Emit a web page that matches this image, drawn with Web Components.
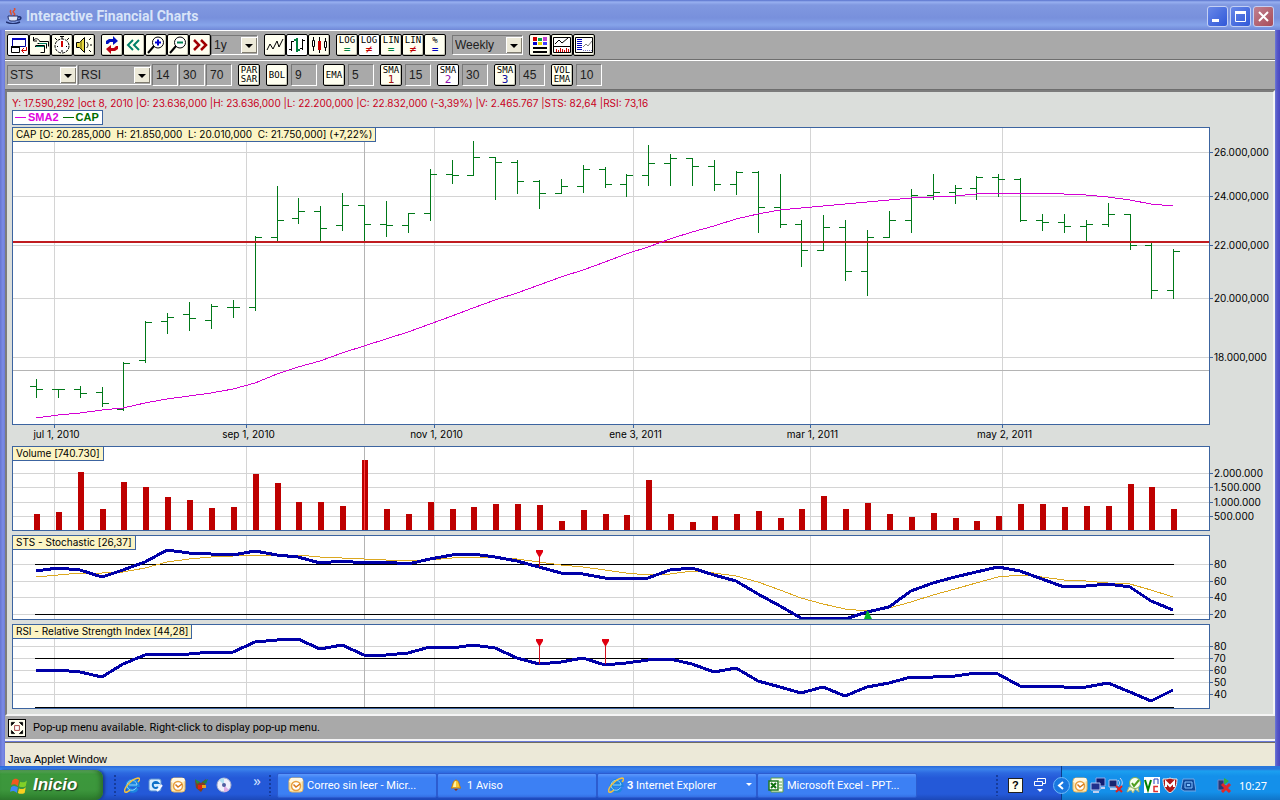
<!DOCTYPE html>
<html lang="es">
<head>
<meta charset="utf-8">
<title>Interactive Financial Charts</title>
<style>
	body {
		margin: 0;
		background: #245edb;
		font-family: "Liberation Sans", Arial, sans-serif;
		font-size: 11px;
		color: #000;
	}

	desktop-screen {
		min-height: 100vh;
	}
</style>
</head>
<body>

<desktop-screen>
	<app-window caption="Interactive Financial Charts">
		<tool-bar>
			<tool-group>
				<tool-button icon="detach" label="Detach window" on></tool-button>
				<tool-button icon="restore" label="Restore windows"></tool-button>
				<tool-button icon="timer" label="Auto refresh"></tool-button>
				<tool-button icon="sound" label="Sound"></tool-button>
			</tool-group>
			<tool-group>
				<tool-button icon="refresh" label="Refresh"></tool-button>
				<tool-button icon="back" label="Back"></tool-button>
				<tool-button icon="zoomin" label="Zoom in"></tool-button>
				<tool-button icon="zoomout" label="Zoom out"></tool-button>
				<tool-button icon="forward" label="Forward"></tool-button>
				<tool-select label="Range" options="1y,2y,5y" style="--width: 47px"></tool-select>
			</tool-group>
			<tool-group>
				<tool-button icon="line" label="Line chart"></tool-button>
				<tool-button icon="ohlc" label="Bar chart" on></tool-button>
				<tool-button icon="candle" label="Candlestick chart"></tool-button>
			</tool-group>
			<tool-group>
				<tool-button top="LOG" bottom="=" tint="#008040"></tool-button>
				<tool-button top="LOG" bottom="≠" tint="#c00000" on></tool-button>
				<tool-button top="LIN" bottom="=" tint="#008040"></tool-button>
				<tool-button top="LIN" bottom="≠" tint="#c00000"></tool-button>
				<tool-button top="%" bottom="=" tint="#0000c0"></tool-button>
			</tool-group>
			<tool-group>
				<tool-select label="Period" options="Weekly,Daily,Monthly" style="--width: 71px"></tool-select>
			</tool-group>
			<tool-group>
				<tool-button icon="colors" label="Colors"></tool-button>
				<tool-button icon="panels" label="Panels"></tool-button>
				<tool-button icon="table" label="Data table"></tool-button>
			</tool-group>
		</tool-bar>

		<tool-bar>
			<tool-group style="--gap: 1px">
				<tool-select label="Indicator 1" options="STS,RSI,MACD" style="--width: 70px"></tool-select>
				<tool-select label="Indicator 2" options="RSI,STS,MACD" style="--width: 73px"></tool-select>
				<tool-field label="RSI period" value="14"></tool-field>
				<tool-field label="RSI low" value="30"></tool-field>
				<tool-field label="RSI high" value="70"></tool-field>
			</tool-group>
			<tool-group>
				<tool-button top="PAR" bottom="SAR"></tool-button>
			</tool-group>
			<tool-group style="--gap: 3px">
				<tool-button top="BOL"></tool-button>
				<tool-field label="BOL period" value="9"></tool-field>
			</tool-group>
			<tool-group style="--gap: 3px">
				<tool-button top="EMA"></tool-button>
				<tool-field label="EMA period" value="5"></tool-field>
			</tool-group>
			<tool-group style="--gap: 3px">
				<tool-button top="SMA" bottom="1" tint="#a01010"></tool-button>
				<tool-field label="SMA 1 period" value="15"></tool-field>
			</tool-group>
			<tool-group style="--gap: 3px">
				<tool-button top="SMA" bottom="2" tint="#9010b0" on></tool-button>
				<tool-field label="SMA 2 period" value="30"></tool-field>
			</tool-group>
			<tool-group style="--gap: 3px">
				<tool-button top="SMA" bottom="3" tint="#1010a0"></tool-button>
				<tool-field label="SMA 3 period" value="45"></tool-field>
			</tool-group>
			<tool-group style="--gap: 3px">
				<tool-button top="VOL" bottom="EMA"></tool-button>
				<tool-field label="Volume EMA period" value="10"></tool-field>
			</tool-group>
		</tool-bar>

		<chart-panel>
			<span slot="info">Y: 17.590,292 |oct 8, 2010 |O: 23.636,000 |H: 23.636,000 |L: 22.200,000 |C: 22.832,000 (-3,39%) |V: 2.465.767 |STS: 82,64 |RSI: 73,16</span>
			<chart-pane kind="price">CAP [O: 20.285,000  H: 21.850,000  L: 20.010,000  C: 21.750,000] (+7,22%)</chart-pane>
			<date-axis></date-axis>
			<chart-pane kind="volume">Volume [740.730]</chart-pane>
			<chart-pane kind="sts">STS - Stochastic [26,37]</chart-pane>
			<chart-pane kind="rsi">RSI - Relative Strength Index [44,28]</chart-pane>
		</chart-panel>

		<hint-bar>Pop-up menu available. Right-click to display pop-up menu.</hint-bar>
		<span slot="status">Java Applet Window</span>
	</app-window>

	<task-bar></task-bar>
</desktop-screen>

<script>
/* ---------- icons ---------- */

// toolbar icons live on a 20x20 grid
const ICONS = {
	detach: '<path d="M4.500 3.500h13v8h-13z" fill="#fff" stroke="#0000a0"/><path d="M4 3h14v2H4z" fill="#0000c0"/><path d="M3.500 11.500h8v6h-8z" fill="#fff" stroke="#000"/><path d="M3 11h9v2H3z"/><path d="M18.500 12v3.500H14M16 13l-2.500 2.500L16 18" fill="none" stroke="#d00000"/>',
	restore: '<path d="M9.500 6.500h9v5M7.500 8.500h9v5M5.500 10.500h9v7h-4M5 11.500h10" fill="none" stroke="#000"/><path d="M10 6.500C8 3 5 3 3.500 5.500M3.500 2v4H7" fill="none" stroke="#000"/><path d="M9 8h8v1H9zM6 11h8v1H6z" fill="#008060"/>',
	timer: '<circle cx="10" cy="11" r="7" fill="#fff" stroke="#000" stroke-dasharray="3 1"/><path d="M8 1.500h4M10 2v2M3 3l2 2M17 3l-2 2" stroke="#000"/><path d="M10 6v6" stroke="#d00000" stroke-width="2"/><path d="M10 15v2M5 11.500h1M14 11.500h1" stroke="#000"/>',
	sound: '<path d="M2.500 7.500h3l5-5v15l-5-5h-3z" fill="#e8d840" stroke="#000"/><path d="M7 6v8" stroke="#605800"/><path d="M12.500 7c2 2 2 4 0 6" fill="none" stroke="#000"/><path d="M15 5l2-2M16 10h2M15 15l2 2" stroke="#000"/>',
	refresh: '<path d="M4 9V6l3-2h4V1l5 5-5 4V7H8L6 9z" fill="#0010c0"/><path d="M16 11v3l-3 2H9v3l-5-5 5-4v3h3l2-2z" fill="#c00010"/>',
	back: '<path d="M9 5l-5 5 5 5M15 5l-5 5 5 5" fill="none" stroke="#008068" stroke-width="2"/>',
	zoomin: '<circle cx="12" cy="7.500" r="5.500" fill="#fff" stroke="#000"/><path d="M8 11l-6 7" stroke="#000" stroke-width="2"/><path d="M9 7.500h6M12 4.500v6" stroke="#0000d0" stroke-width="2"/>',
	zoomout: '<circle cx="12" cy="7.500" r="5.500" fill="#fff" stroke="#000"/><path d="M8 11l-6 7" stroke="#000" stroke-width="2"/><path d="M9 7.500h6" stroke="#008050" stroke-width="2"/>',
	forward: '<path d="M4 5l5 5-5 5M11 5l5 5-5 5" fill="none" stroke="#a00000" stroke-width="2.500"/>',
	line: '<path d="M2 15l3-6 3 5 4-8 2 6 4-8" fill="none" stroke="#000"/>',
	ohlc: '<path d="M4.500 6v10M2 14.500h2M5 6.500h2" stroke="#000"/><path d="M10 3v14M7 5h3M10 15h3" stroke="#008040" stroke-width="2"/><path d="M15.500 4v11M13 13.500h2M16 5.500h2" stroke="#000"/>',
	candle: '<path d="M4.500 2v3M4.500 12v4" stroke="#000"/><path d="M3.500 5.500h2v6h-2z" fill="#fff" stroke="#000"/><path d="M10.500 2v16" stroke="#000"/><path d="M9 6h3v9H9z" fill="#d00000"/><path d="M16.500 3v3M16.500 13v3" stroke="#000"/><path d="M15.500 6.500h2v6h-2z" fill="#fff" stroke="#000"/>',
	colors: '<path d="M3 2h4v4H3z" fill="#d00000"/><path d="M8 3h4v3H8z" fill="#00a050"/><path d="M13 2h4v4h-4z" fill="#c040d0"/><path d="M3 7h4v3H3z" fill="#0000d0"/><path d="M8 7h4v3H8z" fill="#e8d800"/><path d="M13 7h4v3h-4z" fill="#4040ff"/><path d="M3 12h14v2H3zM3 16h14v2H3z"/>',
	panels: '<path d="M1.500 2.500h17v15h-17z" fill="#fff" stroke="#000"/><path d="M2 11.500h16" stroke="#000"/><path d="M3 9l4-4 3 3 6-5" fill="none" stroke="#000"/><path d="M4.500 17v-3M6.500 17v-2M8.500 17v-4M10.500 17v-3M12.500 17v-2M14.500 17v-4M16.500 17v-3" stroke="#d00000"/>',
	table: '<path d="M1.500 2.500h17v15h-17z" fill="#fff" stroke="#000"/><path d="M3 4.500h5M3 6.500h5M3 8.500h5M3 10.500h5M3 12.500h5M3 14.500h5" stroke="#0000c0"/><path d="M9 12l3-3 2 2 4-5" fill="none" stroke="#808080"/><path d="M9 15.500h9" stroke="#8080c0" stroke-dasharray="1 1"/>',
	popup: '<path d="M3 3h4L3 7zM17 3h-4l4 4zM3 17h4l-4-4zM17 17h-4l4-4z" stroke="#000"/><path d="M7 7h6v6H7z" fill="#fff" stroke="#902020"/>'
};

// 16x16 icons of the shell
const SHELL_ICONS = {
	java: '<path d="M8 0c3 2-3 3 0 5 2 2-1 3-1 3M5 2c-2 2 1 3 0 5" fill="none" stroke="#e05030" stroke-width="1.500"/><path d="M2 8h10c0 3-1 5-3 5H5c-2 0-3-2-3-5z" fill="#dce4f8" stroke="#203070"/><path d="M12 9c4-1 4 3-1 3M0 14c4 2 10 2 14 0" fill="none" stroke="#203070" stroke-width="1.500"/>',
	ie: '<path d="M13 11a5 5 0 1 1 .5-3H5" fill="none" stroke="#1c86e0" stroke-width="4"/><path d="M12.500 10.500a5 5 0 1 1 .5-2.500H5" fill="none" stroke="#8ed4ff"/><path d="M1 15c-2-3 6-13 13-14 3 0 1 3 0 4M1 15c1 1 4-1 5-2" fill="none" stroke="#f0c040" stroke-width="1.500"/>',
	desktop: '<rect x="2" y="2" width="12" height="12" rx="2" fill="#d8ecff" stroke="#5890d0"/><path d="M11 10a3 3 0 1 1 0-4H6" fill="none" stroke="#1070c8" stroke-width="2"/><path d="M10 14l5-6" stroke="#f8f8ff" stroke-width="2"/>',
	outlook: '<rect x="1" y="1" width="14" height="14" rx="3" fill="#fbe8b4" stroke="#e8b860"/><path d="M3 1h11l1 3-8 3-6-2z" fill="#fff8e4"/><circle cx="8" cy="9" r="4.500" fill="#fff" stroke="#e8a040" stroke-width="1.500"/><path d="M5.500 7.500L8 10l4-3" fill="none" stroke="#d87818" stroke-width="1.500"/>',
	media: '<path d="M2 3l6 3 5-4-1 7-4 6-5-4z" fill="#804020"/><path d="M2 2l5 3-3 2z" fill="#209040"/><path d="M9 5l6-3-2 5z" fill="#208040"/><path d="M5 8h4v4H5z" fill="#e02010"/><path d="M9 8h4v3H9z" fill="#e8a020"/>',
	disc: '<circle cx="8" cy="8" r="7" fill="#f0f0fa" stroke="#a8b0d0"/><path d="M8 8L3 3a7 7 0 0 1 5-2z" fill="#b0e0f0"/><path d="M8 8l5 5a7 7 0 0 1-5 2z" fill="#e0b0e8"/><circle cx="8" cy="8" r="2" fill="#5060a0"/>',
	bell: '<path d="M3 11c2-1 1-7 5-8 4 1 3 7 5 8z" fill="#f8c830" stroke="#c07810"/><path d="M6 6c1-2 2-2 2-2v6H5z" fill="#fff0a0"/><path d="M6 12h4l-2 2z" fill="#903010"/>',
	excel: '<path d="M3 1h12v14H3z" fill="#f4fff0" stroke="#60a048"/><path d="M1 4h9v9H1z" fill="#fff" stroke="#207820" stroke-width="1.500"/><path d="M3 6l5 5M8 6l-5 5" stroke="#107010" stroke-width="2"/><path d="M11 5h3M11 8h3M11 11h3" stroke="#60a048"/>',
	restorewin: '<path d="M5.500 3.500v-2h8v5h-3M2.500 4.500h8v4h-8z" fill="none" stroke="#fff"/><path d="M5 12h6l-3 3z" fill="#fff"/>',
	network: '<path d="M6 1h9v8H6z" fill="#101c70" stroke="#90a8e8"/><path d="M1 6h9v7H1z" fill="#20308c" stroke="#b0c4f0"/><path d="M3 15h6M11 11h4" stroke="#c0d0f0" stroke-width="2"/>',
	wifi: '<path d="M1 3h8v7H1z" fill="#182470" stroke="#b0c4f0"/><path d="M2 12h7" stroke="#c0d0f0" stroke-width="2"/><path d="M10 3c2 2 2 4 0 6M12 1c3 3 3 7 0 9" fill="none" stroke="#c8d8f8"/><path d="M8 9l6 6M14 9l-6 6" stroke="#e02020" stroke-width="2"/>',
	badge: '<path d="M3 10l-2 5 4-2 2 3 2-4 4 3-1-5z" fill="#f0f4d8" stroke="#a8b878"/><circle cx="9" cy="6" r="5.500" fill="#f8fff0" stroke="#80b050"/><path d="M6 6l2 3 5-6" fill="none" stroke="#50a020" stroke-width="2"/>',
	vnc: '<path d="M0 0h16v16H0z" fill="#fff"/><path d="M1 3l3 10 3-10" fill="none" stroke="#008000" stroke-width="2"/><path d="M10 7V2h4v5" fill="none" stroke="#2040c0"/><path d="M14 9.500h-4v5h4" fill="none" stroke="#e03030" stroke-width="1.500"/>',
	shield: '<path d="M1 2c3 0 5 0 7-1 2 1 4 1 7 1 0 7-2 11-7 14C3 13 1 9 1 2z" fill="#b01818" stroke="#f0f0f0"/><path d="M4 10V5l4 4 4-4v5" fill="none" stroke="#fff" stroke-width="2"/>',
	chip: '<path d="M3 2h11l2 12H4L1 12z" fill="#104898" stroke="#70a8e8"/><path d="M5 5h7v6H5z" fill="none" stroke="#80c0ff"/><path d="M7 7h3v2H7z" fill="#80c0ff"/>',
	unplug: '<path d="M2 3h6v5h3v5H2z" fill="#283878" stroke="#7088c8"/><path d="M8 1l5 3-5 4z" fill="#30b040"/><path d="M6 7l8 8M14 7l-8 8" stroke="#e02828" stroke-width="3"/>',
	flag: '<path d="M2 4c2-2 4-2 6 0L7 9C5 7 3 7 1 8z" fill="#f05820"/><path d="M9 5c2 1 4 1 6-1l-1 5c-2 1-4 1-6 0z" fill="#80d028"/><path d="M1 10c2-2 4-1 6 0l-1 5c-2-2-4-2-6-1z" fill="#3c88f8"/><path d="M8 11c2 1 4 1 6-1l-1 5c-2 1-4 1-6 0z" fill="#f8d020"/>'
};

function shellIcon(name, size = 16) {
	return `<svg width="${size}" height="${size}" viewBox="0 0 16 16" aria-hidden="true">${SHELL_ICONS[name]}</svg>`;
}

/* ---------- chart data: one entry per week, y measured down from the top of its pane ---------- */

// high, low, open, close
const BARS = [
	[252, 270, 259, 262], [262, 270, 262, 262], [259, 270, 262, 266], [260, 279, 265, 276],
	[235, 283, 282, 236], [194, 235, 233, 195], [186, 206, 194, 190], [175, 203, 187, 191],
	[177, 201, 193, 179], [173, 190, 180, 180], [109, 183, 180, 110], [59, 114, 110, 93],
	[71, 96, 91, 84], [79, 114, 84, 101], [66, 103, 98, 78], [78, 114, 78, 97],
	[74, 109, 97, 98], [86, 105, 98, 86], [42, 93, 86, 47], [33, 56, 47, 48],
	[14, 48, 48, 30], [30, 72, 30, 35], [33, 66, 35, 54], [53, 81, 54, 66],
	[52, 66, 66, 59], [38, 65, 59, 42], [40, 60, 42, 57], [47, 69, 57, 48],
	[18, 58, 48, 36], [27, 58, 36, 31], [31, 58, 31, 39], [33, 63, 39, 57],
	[44, 67, 57, 45], [44, 105, 45, 80], [47, 100, 80, 97], [93, 139, 97, 123],
	[88, 123, 123, 100], [93, 153, 100, 144], [103, 168, 144, 110], [84, 110, 110, 93],
	[62, 105, 93, 68], [47, 72, 68, 65], [58, 76, 65, 61], [49, 72, 61, 50],
	[47, 69, 50, 52], [51, 94, 52, 93], [87, 103, 93, 95], [87, 105, 95, 99],
	[93, 114, 99, 97], [76, 99, 97, 87], [87, 122, 87, 118], [115, 171, 118, 163],
	[122, 171, 163, 124]
];

const SMA2 = [291, 288, 286, 283, 281, 276, 272, 269, 266, 262, 256, 247, 240, 234, 226, 219, 212, 205, 197, 189, 181, 173, 166, 158, 150, 143, 135, 127, 120, 112, 105, 99, 92, 87, 83, 81, 79, 77, 75, 73, 71, 70, 69, 67, 66, 66, 66, 67, 68, 70, 73, 77, 79];

const VOLUME = [68, 66, 26, 63, 36, 41, 51, 54, 62, 61, 28, 37, 56, 56, 60, 14, 63, 68, 56, 63, 61, 58, 58, 59, 75, 64, 68, 69, 34, 68, 76, 70, 68, 65, 72, 63, 50, 63, 57, 68, 71, 67, 72, 75, 70, 58, 58, 61, 60, 60, 38, 41, 63];

const STS = [36, 33, 35, 42, 35, 27, 15, 18, 19, 20, 16, 20, 22, 28, 26, 28, 27, 29, 24, 20, 19, 22, 26, 32, 38, 39, 43, 44, 43, 35, 33, 40, 46, 59, 71, 83, 83, 84, 77, 72, 56, 48, 42, 37, 32, 36, 44, 52, 51, 49, 52, 66, 75];

const STS_SIGNAL = [42, 40, 38, 38, 37, 33, 27, 24, 22, 21, 20, 20, 20, 22, 23, 24, 25, 26, 25, 23, 22, 22, 24, 27, 30, 32, 35, 38, 40, 39, 36, 38, 41, 47, 55, 63, 69, 74, 76, 73, 67, 60, 54, 48, 42, 40, 42, 45, 46, 48, 49, 55, 62];

const RSI = [46, 46, 48, 53, 40, 31, 30, 30, 28, 28, 18, 16, 15, 25, 21, 31, 31, 29, 23, 24, 21, 24, 34, 40, 38, 34, 41, 39, 36, 35, 40, 48, 44, 57, 63, 69, 63, 72, 63, 59, 53, 53, 52, 49, 50, 62, 62, 63, 63, 59, 68, 77, 66];

const PLOT_WIDTH = 1198;
const DATES = [[42, 'jul 1, 2010'], [234, 'sep 1, 2010'], [422, 'nov 1, 2010'], [621, 'ene 3, 2011'], [798, 'mar 1, 2011'], [990, 'may 2, 2011']];
const CURSOR_X = 352;

const PANES = {
	price: {
		height: 298,
		scale: [[25, '26.000,000'], [69, '24.000,000'], [118, '22.000,000'], [171, '20.000,000'], [230, '18.000,000']],
		draw: drawPrice
	},
	volume: {
		height: 85,
		scale: [[27, '2.000.000'], [41, '1.500.000'], [56, '1.000.000'], [70, '500.000']],
		draw: drawVolume
	},
	sts: {
		height: 85,
		scale: [[29, '80'], [46, '60'], [62, '40'], [79, '20']],
		draw: () => limits(29, 79) + polyline(STS_SIGNAL, '#dca820', 1) + polyline(STS, '#0000a8', 3)
			+ sellMark(23, 32) + `<path d="M${weekX(38)} 76h1l4 8h-8z" fill="#00b428" shape-rendering="auto"/>`
	},
	rsi: {
		height: 85,
		scale: [[22, '80'], [34, '70'], [46, '60'], [58, '50'], [70, '40']],
		draw: () => limits(34, 83) + polyline(RSI, '#0000a8', 3) + sellMark(23, 40) + sellMark(26, 40)
	}
};

function weekX(i) {
	return 24 + Math.round(i * 21.87);
}

function polyline(values, color, width) {
	const points = values.map((y, i) => `${weekX(i)},${y}`).join(' ');
	return `<polyline points="${points}" fill="none" stroke="${color}" stroke-width="${width}"/>`;
}

function limits(a, b) {
	return `<path d="M23 ${a}.5H1162M23 ${b}.5H1162" stroke="#000"/>`;
}

function sellMark(i, y) {
	const x = weekX(i);
	return `<path d="M${x}.5 20V${y}" stroke="#d01020"/><path d="M${x - 3} 15h7v2l-3 5h-1l-3-5z" fill="#e00010" shape-rendering="auto"/>`;
}

function drawPrice() {
	let d = '';
	BARS.forEach(([high, low, open, close], i) => {
		const x = weekX(i);
		d += `M${x}.5 ${high}V${low + 1}M${x - 6} ${open}.5h6M${x + 1} ${close}.5h6`;
	});
	return `<path d="M0 243.5H${PLOT_WIDTH}" stroke="#b4b4b4"/>
		<path d="${d}" stroke="#007818" fill="none"/>
		<path d="M0 115H${PLOT_WIDTH}" stroke="#c01c20" stroke-width="2"/>
		${polyline(SMA2, '#d400d4', 1)}`;
}

function drawVolume() {
	return VOLUME.map((top, i) => `<path d="M${weekX(i) - 2} ${top}h6V84h-6z" fill="#be0000"/>`).join('')
		+ `<path d="M${CURSOR_X}.5 14V84" stroke="#ff4040"/>`;
}

/* ---------- toolbar parts ---------- */

class ToolBar extends HTMLElement {
	constructor() {
		super();
		this.attachShadow({ mode: 'open' });
		this.shadowRoot.innerHTML = `
		<style>
			:host {
				display: flex;
				align-items: center;
				gap: 6px;
				height: 30px;
				padding: 0 2px;
				box-sizing: border-box;
				background: #a9a9a9;
				border-top: 1px solid #fff;
				border-bottom: 1px solid #6e6e6e;
			}
		</style>
		<slot></slot>
		`;
	}
}

class ToolGroup extends HTMLElement {
	constructor() {
		super();
		this.attachShadow({ mode: 'open' });
		this.shadowRoot.innerHTML = `
		<style>
			:host {
				display: flex;
				align-items: center;
				gap: var(--gap, 0);
			}
		</style>
		<slot></slot>
		`;
	}
}

class ToolButton extends HTMLElement {
	constructor() {
		super();
		this.attachShadow({ mode: 'open' });
	}

	connectedCallback() {
		const icon = this.getAttribute('icon');
		const bottom = this.getAttribute('bottom');
		const label = this.getAttribute('label');
		const tint = this.getAttribute('tint');
		this.shadowRoot.innerHTML = `
		<style>
			:host {
				display: block;
			}

			button {
				display: flex;
				flex-direction: column;
				align-items: center;
				justify-content: center;
				width: 22px;
				height: 22px;
				margin: 0;
				padding: 0;
				border: 1px solid #000;
				border-radius: 2px;
				background: #fffff0;
				box-shadow: inset -1px -1px #c8c8b8;
				font: 9px/9px "DejaVu Sans Mono", monospace;
				color: #000;
			}

			:host([on]) button {
				background: #fff;
				box-shadow: none;
			}

			.tint {
				color: ${tint};
				font-size: 11px;
				line-height: 10px;
			}
		</style>
		<button type="button"${label ? ` aria-label="${label}"` : ''}>${icon
			? `<svg width="20" height="20" viewBox="0 0 20 20" aria-hidden="true">${ICONS[icon]}</svg>`
			: `<span>${this.getAttribute('top')}</span>${bottom ? `<span${tint ? ' class="tint"' : ''}>${bottom}</span>` : ''}`}</button>
		`;
	}
}

class ToolSelect extends HTMLElement {
	constructor() {
		super();
		this.attachShadow({ mode: 'open' });
	}

	connectedCallback() {
		const options = this.getAttribute('options').split(',');
		this.shadowRoot.innerHTML = `
		<style>
			:host {
				display: grid;
				grid-template-columns: 1fr 16px;
				align-items: center;
				width: var(--width);
				height: 20px;
				box-sizing: border-box;
				border: 1px solid;
				border-color: #787878 #fff #fff #787878;
				background: #a9a9a9;
			}

			select {
				grid-area: 1 / 1 / 2 / 3;
				appearance: none;
				width: 100%;
				height: 18px;
				padding: 0 0 0 2px;
				border: 0;
				border-radius: 0;
				background: none;
				font: 12px "Liberation Sans", Arial, sans-serif;
				color: #202020;
			}

			svg {
				grid-area: 1 / 2;
				background: #ece9d8;
				box-shadow: inset 1px 1px #fff, inset -1px -1px #807c70;
				pointer-events: none;
			}
		</style>
		<select aria-label="${this.getAttribute('label')}">${options.map(o => `<option>${o}</option>`).join('')}</select>
		<svg width="16" height="16" aria-hidden="true"><path d="M4 7h8l-4 4z"/></svg>
		`;
	}
}

class ToolField extends HTMLElement {
	constructor() {
		super();
		this.attachShadow({ mode: 'open' });
	}

	connectedCallback() {
		this.shadowRoot.innerHTML = `
		<style>
			:host {
				display: block;
			}

			input {
				display: block;
				width: 26px;
				height: 22px;
				box-sizing: border-box;
				padding: 0 0 0 3px;
				border: 1px solid;
				border-color: #787878 #fff #fff #787878;
				background: #a9a9a9;
				font: 12px "Liberation Sans", Arial, sans-serif;
				color: #202020;
			}
		</style>
		<input type="text" aria-label="${this.getAttribute('label')}" value="${this.getAttribute('value')}">
		`;
	}
}

/* ---------- charts ---------- */

class ChartPanel extends HTMLElement {
	constructor() {
		super();
		this.attachShadow({ mode: 'open' });
		this.shadowRoot.innerHTML = `
		<style>
			:host {
				display: block;
				padding: 4px 0 5px 5px;
				background: #dbdedb;
				border: 2px solid;
				border-color: #7c7c7c #f4f4f4 #f4f4f4 #7c7c7c;
				font-family: Inter, sans-serif;
				font-size: 10px;
			}

			.info {
				height: 14px;
				line-height: 14px;
				color: #c8001c;
				white-space: nowrap;
			}

			.legend {
				display: flex;
				align-items: center;
				gap: 4px;
				width: max-content;
				height: 15px;
				box-sizing: border-box;
				margin-bottom: 2px;
				padding: 0 3px 0 2px;
				border: 1px solid #3c64a0;
				background: #fff;
				font: bold 11px/13px "Liberation Sans", Arial, sans-serif;
			}

			.legend span {
				display: flex;
				align-items: center;
				gap: 2px;
			}

			.legend span::before {
				content: "";
				width: 11px;
				border-top: 1px solid;
			}

			.sma {
				color: #e000e0;
			}

			.cap {
				color: #006c00;
			}
		</style>
		<div class="info"><slot name="info"></slot></div>
		<div class="legend"><span class="sma">SMA2</span><span class="cap">CAP</span></div>
		<slot></slot>
		`;
	}
}

class ChartPane extends HTMLElement {
	constructor() {
		super();
		this.attachShadow({ mode: 'open' });
	}

	connectedCallback() {
		const pane = PANES[this.getAttribute('kind')];
		const months = DATES.map(([x]) => `M${x}.5 0V${pane.height}`).join('');
		const rows = pane.scale.map(([y]) => `M0 ${y}.5H${PLOT_WIDTH}`).join('');
		const ticks = pane.scale.map(([y]) => `M0 ${y}.5h3`).join('');
		const labels = pane.scale.map(([y, text]) => `<text x="4" y="${y + 4}">${text}</text>`).join('');
		this.shadowRoot.innerHTML = `
		<style>
			:host {
				display: grid;
				grid-template-columns: 1fr 63px;
				position: relative;
				margin-bottom: 4px;
			}

			:host([kind="price"]), :host([kind="rsi"]) {
				margin-bottom: 0;
			}

			svg {
				display: block;
				width: 100%;
				height: ${pane.height}px;
			}

			.plot {
				background: #fff;
				shape-rendering: crispEdges;
			}

			.plot * {
				vector-effect: non-scaling-stroke;
			}

			.title {
				position: absolute;
				top: 0;
				left: 0;
				padding: 0 3px;
				border: 1px solid #3c64a0;
				background: #fcf4c4;
				line-height: 13px;
				white-space: pre;
			}
		</style>
		<svg class="plot" viewBox="0 0 ${PLOT_WIDTH} ${pane.height}" preserveAspectRatio="none">
			<path d="${months}${rows}" stroke="#d4d4d4"/>
			<path d="M${CURSOR_X}.5 0V${pane.height}" stroke="#b4b4b4"/>
			${pane.draw()}
			<path d="M.5 .5H${PLOT_WIDTH - 1}.5V${pane.height - 1}.5H.5z" fill="none" stroke="#3c64a0"/>
		</svg>
		<svg><path d="${ticks}" stroke="#3c64a0"/>${labels}</svg>
		<div class="title"><slot></slot></div>
		`;
	}
}

class DateAxis extends HTMLElement {
	constructor() {
		super();
		this.attachShadow({ mode: 'open' });
		this.shadowRoot.innerHTML = `
		<style>
			:host {
				display: block;
				margin-right: 63px;
			}

			svg {
				display: block;
				width: 100%;
				height: 21px;
				text-anchor: middle;
			}
		</style>
		<svg>${DATES.map(([x, text]) => {
			const at = `${(x + 0.5) / PLOT_WIDTH * 100}%`;
			return `<line x1="${at}" x2="${at}" y1="0" y2="3" stroke="#3c64a0"/><text x="${at}" dx="2" y="13">${text}</text>`;
		}).join('')}</svg>
		`;
	}
}

class HintBar extends HTMLElement {
	constructor() {
		super();
		this.attachShadow({ mode: 'open' });
		this.shadowRoot.innerHTML = `
		<style>
			:host {
				display: flex;
				align-items: center;
				gap: 7px;
				height: 25px;
				box-sizing: border-box;
				padding: 0 3px;
				background: #a9a9a9;
				border-bottom: 2px solid #f4f4f4;
				font-family: Roboto, sans-serif;
			}

			svg {
				border: 1px solid #000;
				background: #fffff0;
			}
		</style>
		<svg width="16" height="16" viewBox="0 0 20 20" aria-hidden="true">${ICONS.popup}</svg>
		<slot></slot>
		`;
	}
}

/* ---------- window and desktop ---------- */

class AppWindow extends HTMLElement {
	constructor() {
		super();
		this.attachShadow({ mode: 'open' });
	}

	connectedCallback() {
		this.shadowRoot.innerHTML = `
		<style>
			:host {
				display: flex;
				flex-direction: column;
				flex: 1;
				padding: 0 5px;
				background: linear-gradient(90deg, #6474d0, #7c8ce8 3px, #6a7ad8 5px, #6a7ad8 calc(100% - 5px), #5858c8 calc(100% - 3px), #4848c0);
			}

			header {
				display: flex;
				align-items: center;
				gap: 4px;
				height: 30px;
				box-sizing: border-box;
				margin: 0 -5px;
				padding: 2px 6px 0;
				background: linear-gradient(#5872cc, #98b0f0 2px, #8098e0 5px, #7890dc 18px, #86a4ea 25px, #7088d8);
			}

			h1 {
				flex: 1;
				margin: 0;
				font: bold 14px Roboto, sans-serif;
				color: #d8e4f8;
			}

			.controls {
				display: flex;
				gap: 2px;
			}

			button {
				width: 21px;
				height: 21px;
				padding: 0;
				border: 1px solid #c4d0f4;
				border-radius: 3px;
				background: linear-gradient(135deg, #6888e8, #3058d8);
			}

			button.close {
				background: linear-gradient(135deg, #c08090, #a84c58);
			}

			button svg {
				display: block;
			}

			footer {
				flex: 1;
				display: flex;
				align-items: flex-end;
				min-height: 24px;
				box-sizing: border-box;
				padding: 0 3px 1px;
				margin-top: 1px;
				background: #ece9d8;
				border-top: 1px solid #706c60;
			}
		</style>
		<header>
			${shellIcon('java')}
			<h1>${this.getAttribute('caption')}</h1>
			<div class="controls">
				<button type="button" aria-label="Minimize"><svg width="19" height="19"><path d="M4 12h7v3H4z" fill="#fff"/></svg></button>
				<button type="button" aria-label="Maximize"><svg width="19" height="19"><path d="M4.500 5.500h10v9h-10z" fill="none" stroke="#fff"/><path d="M4 4h11v3H4z" fill="#fff"/></svg></button>
				<button type="button" class="close" aria-label="Close"><svg width="19" height="19"><path d="M5 5l9 9M14 5l-9 9" stroke="#fff" stroke-width="2"/></svg></button>
			</div>
		</header>
		<slot></slot>
		<footer><slot name="status"></slot></footer>
		`;
	}
}

class TaskButton extends HTMLElement {
	constructor() {
		super();
		this.attachShadow({ mode: 'open' });
	}

	connectedCallback() {
		this.shadowRoot.innerHTML = `
		<style>
			:host {
				display: block;
				flex: 0 1 160px;
				min-width: 0;
			}

			button {
				display: flex;
				align-items: center;
				gap: 3px;
				width: 100%;
				height: 25px;
				padding: 0 4px 0 10px;
				border: 1px solid #2c5cd0;
				border-radius: 2px;
				background: linear-gradient(#5c98fc, #3c80f4 4px, #3c80f4 20px, #3470e4);
				font: 11px Roboto, sans-serif;
				color: #fff;
				white-space: nowrap;
			}

			.label {
				flex: 1;
				text-align: left;
			}
		</style>
		<button type="button">${shellIcon(this.getAttribute('icon'))}<span class="label"><slot></slot></span>${this.hasAttribute('group')
			? '<svg width="6" height="4" aria-hidden="true"><path d="M0 0h6l-3 3z" fill="#fff"/></svg>' : ''}</button>
		`;
	}
}

class TaskBar extends HTMLElement {
	constructor() {
		super();
		this.attachShadow({ mode: 'open' });
		this.shadowRoot.innerHTML = `
		<style>
			:host {
				display: flex;
				align-items: stretch;
				height: 34px;
				background: linear-gradient(#2868d8, #3c84ec 3px, #2c68e0 7px, #2459d8 12px, #2459d8 28px, #1c48b8);
				color: #fff;
				font: 11px "Noto Sans", sans-serif;
			}

			.start {
				display: flex;
				align-items: center;
				gap: 5px;
				width: 103px;
				height: 30px;
				align-self: flex-end;
				padding: 0 0 0 10px;
				border: 0;
				border-radius: 0 8px 8px 0;
				background: linear-gradient(#68b068, #3c983c 4px, #3c963c 20px, #2c7c2c);
				box-shadow: 2px 0 3px #183c90, inset -3px 0 4px #2c702c;
				color: #fff;
				font: italic bold 17px "Liberation Sans", Arial, sans-serif;
				text-shadow: 1px 1px 1px #204020;
			}

			nav, .tasks, .extra, .tray {
				display: flex;
				align-items: center;
				padding-top: 4px;
			}

			.grip {
				width: 4px;
				height: 22px;
				background: radial-gradient(circle, #163c9c 1px, transparent 1px) 0 0 / 4px 4px;
			}

			nav {
				gap: 7px;
				padding-left: 10px;
			}

			.launch {
				display: block;
				height: 16px;
			}

			.more {
				width: 22px;
				padding: 0 0 10px;
				border: 0;
				background: none;
				color: #d0e0ff;
				font: 15px/15px "Noto Sans", sans-serif;
				text-align: right;
			}

			.tasks {
				flex: 1;
				padding-left: 5px;
			}

			.extra {
				gap: 9px;
				padding-right: 13px;
			}

			.help {
				width: 13px;
				height: 13px;
				background: #fffff0;
				border: 1px solid #202020;
				color: #000;
				font: bold 11px/13px "Liberation Sans", sans-serif;
				text-align: center;
			}

			.tray {
				position: relative;
				gap: 2px;
				padding-left: 10px;
				padding-right: 13px;
				border-left: 1px solid #0c3c88;
				background: linear-gradient(#2878dc 3px, #1ca0f0 5px, #1490ea 10px, #1490ea 26px, #1074c8);
			}

			.expand {
				position: absolute;
				left: -9px;
				top: 11px;
				width: 17px;
				height: 17px;
				padding: 0;
				border: 1px solid #70b8f8;
				border-radius: 50%;
				background: #1878e0;
			}

			.expand svg {
				display: block;
			}

			.gap {
				width: 16px;
			}

			time {
				margin-left: 5px;
			}
		</style>
		<button type="button" class="start">${shellIcon('flag', 18)}Inicio</button>
		<nav>
			<span class="grip"></span>
			<a class="launch" href="#ie" aria-label="Internet Explorer">${shellIcon('ie')}</a>
			<a class="launch" href="#desktop" aria-label="Desktop">${shellIcon('desktop')}</a>
			<a class="launch" href="#outlook" aria-label="Outlook">${shellIcon('outlook')}</a>
			<a class="launch" href="#media" aria-label="Media">${shellIcon('media')}</a>
			<a class="launch" href="#disc" aria-label="Disc">${shellIcon('disc')}</a>
			<button type="button" class="more">»</button>
			<span class="grip"></span>
		</nav>
		<div class="tasks">
			<task-button icon="outlook">Correo sin leer - Micr...</task-button>
			<task-button icon="bell">1 Aviso</task-button>
			<task-button icon="ie" group><b>3</b> Internet Explorer</task-button>
			<task-button icon="excel">Microsoft Excel - PPT...</task-button>
		</div>
		<div class="extra">
			<span class="grip"></span>
			<span class="help">?</span>
			${shellIcon('restorewin')}
		</div>
		<div class="tray">
			<button type="button" class="expand" aria-label="Show hidden icons"><svg width="15" height="15"><path d="M9 4L5 7.500L9 11" fill="none" stroke="#fff" stroke-width="2"/></svg></button>
			${['outlook', 'network', 'wifi', 'badge', 'vnc', 'shield', 'chip'].map(n => shellIcon(n)).join('')}
			<span class="gap"></span>
			${shellIcon('unplug')}
			<time>10:27</time>
		</div>
		`;
	}
}

class DesktopScreen extends HTMLElement {
	constructor() {
		super();
		this.attachShadow({ mode: 'open' });
		this.shadowRoot.innerHTML = `
		<style>
			:host {
				display: flex;
				flex-direction: column;
			}
		</style>
		<slot></slot>
		`;
	}
}

customElements.define('tool-bar', ToolBar);
customElements.define('tool-group', ToolGroup);
customElements.define('tool-button', ToolButton);
customElements.define('tool-select', ToolSelect);
customElements.define('tool-field', ToolField);
customElements.define('chart-panel', ChartPanel);
customElements.define('chart-pane', ChartPane);
customElements.define('date-axis', DateAxis);
customElements.define('hint-bar', HintBar);
customElements.define('app-window', AppWindow);
customElements.define('task-button', TaskButton);
customElements.define('task-bar', TaskBar);
customElements.define('desktop-screen', DesktopScreen);
</script>
</body>
</html>
